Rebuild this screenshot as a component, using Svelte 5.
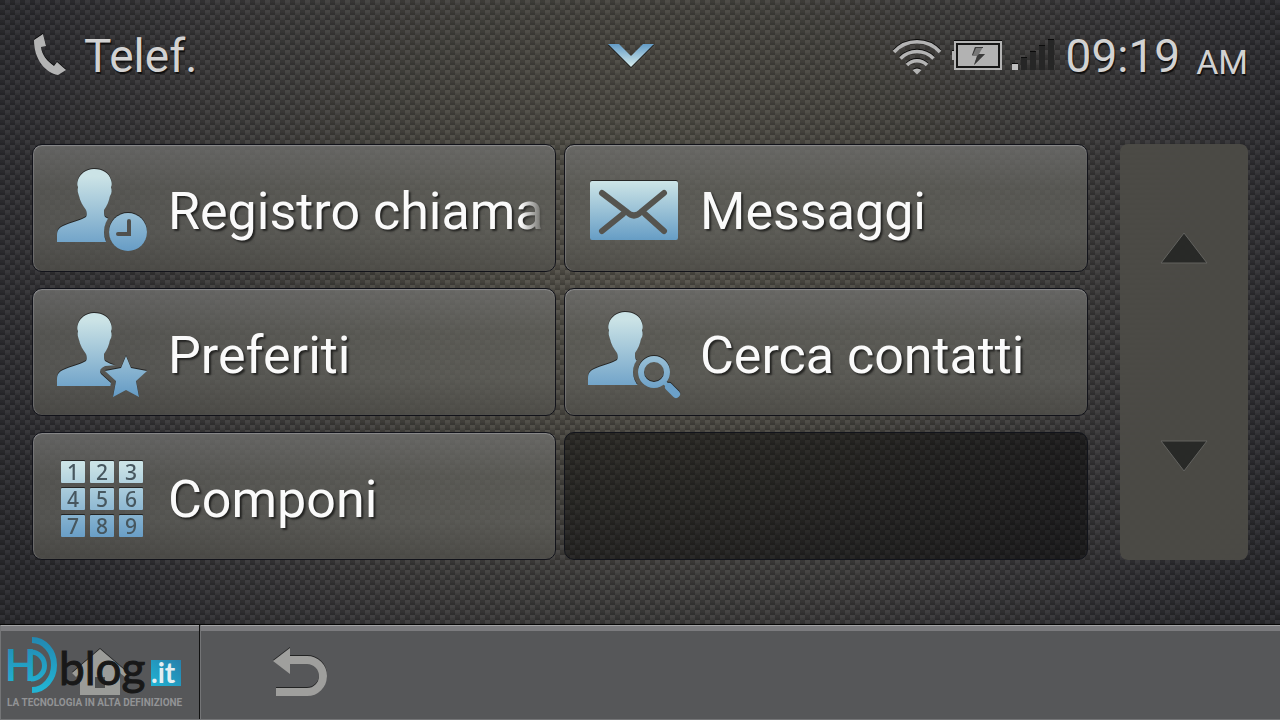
<script lang="ts">
  interface Entry {
    icon: "history" | "mail" | "star" | "search" | "keypad";
    label: string;
  }

  const entries: Entry[] = [
    { icon: "history", label: "Registro chiama" },
    { icon: "mail", label: "Messaggi" },
    { icon: "star", label: "Preferiti" },
    { icon: "search", label: "Cerca contatti" },
    { icon: "keypad", label: "Componi" },
  ];

  const keys = [1, 2, 3, 4, 5, 6, 7, 8, 9];
</script>

{#snippet person(cut: string)}
  <path
    mask="url(#{cut})"
    fill="url(#ice)"
    d="M38 5c-8 0-14 5-16 11-1 3-1 5 0 7-1 3 0 6 1 9 1 5 4 10 7 14 1 3 1 5 0 7-6 4-15 5-23 9-4 2-6 4-6 9v7h75v-7c0-5-2-7-6-9-8-4-15-5-21-9-1-2-1-4-1-7 3-4 5-9 6-14 2-3 2-6 1-9 1-2 1-4 0-7-2-7-8-11-17-11z"
  />
{/snippet}

<div class="screen">
  <header>
    <div class="title">
      <svg width="40" height="44" viewBox="32 32 40 44" aria-hidden="true">
        <path d="M34 38L43 32L46 44L41 45C42 53 47 59 54 64L57 60L66 68L58 73C46 71 34 58 34 38Z" fill="#b4b4b4" />
      </svg>
      <h1>Telef.</h1>
    </div>

    <button class="pull" aria-label="Apri">
      <svg width="48" height="24" viewBox="0 0 48 24">
        <path d="M1 0H12L24 12L36 0H47L24 23Z" fill="url(#chevron)" />
      </svg>
    </button>

    <div class="status">
      <svg width="50" height="40" viewBox="0 0 50 40" fill="none" stroke="#b4b4b4" stroke-width="3.500" aria-hidden="true">
        <path d="M2 16A31 31 0 0 1 48 16M8.500 22.500A23 23 0 0 1 41.500 22.500M15 29A14 14 0 0 1 35 29" />
        <path d="M20.500 34Q25 31 29.500 34L25 38.500Z" fill="#b4b4b4" stroke="none" />
      </svg>
      <svg width="54" height="40" viewBox="0 0 54 40" aria-hidden="true">
        <path d="M2 15h2v9H2z" fill="#b4b4b4" />
        <rect x="5" y="6" width="46" height="27" fill="#161616" stroke="#b4b4b4" stroke-width="2" />
        <rect x="8" y="9" width="40" height="21" fill="#b2b2b2" />
        <path d="M25 11h8l-4 7h6L24 29l3-9h-5z" fill="#777" />
        <path d="M25 11h8v1h-7l-3 7h-1zM29 18h6L24 29l3-9z" fill="#3a3a3a" />
      </svg>
      <svg width="42" height="40" viewBox="0 0 42 40" aria-hidden="true">
        <path d="M0 28h6v6H0z" fill="#c0c0c0" />
        <path d="M9 22h6v12H9zM18 16h6v18h-6zM27 10h6v24h-6zM36 4h6v30h-6z" fill="#262626" />
      </svg>
      <span class="clock">09:19</span>
      <span class="ampm">AM</span>
    </div>
  </header>

  <main>
    <div class="tiles">
      {#each entries as entry}
        <button class="tile">
          <svg class="icon" width="96" height="96" viewBox="0 0 96 96" aria-hidden="true">
            {#if entry.icon === "history"}
              {@render person("cut-history")}
              <circle cx="72" cy="68" r="19" fill="url(#ice)" />
              <path d="M73 57V70H62" fill="none" stroke="#50504d" stroke-width="4" stroke-linecap="round" />
            {:else if entry.icon === "star"}
              {@render person("cut-star")}
              <path d="M70 48L75 60L91 63L80 73L83 89L70 82L57 89L60 73L49 63L65 60Z" fill="url(#ice)" />
            {:else if entry.icon === "search"}
              <g transform="translate(-1 -1)">
                {@render person("cut-search")}
                <circle cx="67" cy="65" r="13" fill="none" stroke="url(#ice)" stroke-width="6" />
                <path d="M77 75L80 78" stroke="#71a6ca" stroke-width="4" />
                <path d="M82 80L89 87" stroke="#6ba0c8" stroke-width="8" stroke-linecap="round" />
              </g>
            {:else if entry.icon === "mail"}
              <rect x="2" y="17" width="88" height="59" rx="2" fill="url(#mail)" />
              <path
                d="M14 29L39 48Q46 55 53 48L76 29M14 67L35 50M76 67L57 50"
                fill="none"
                stroke="#55544f"
                stroke-width="6"
                stroke-linecap="round"
              />
            {:else}
              {#each keys as key, i}
                <rect x={5 + (i % 3) * 29} y={9 + Math.floor(i / 3) * 27} width="24" height="22" rx="1" fill="url(#ice)" />
                <text class="key" x={17 + (i % 3) * 29} y={28 + Math.floor(i / 3) * 27}>{key}</text>
              {/each}
            {/if}
          </svg>
          <span class="label">{entry.label}</span>
        </button>
      {/each}
      <div class="empty"></div>
    </div>

    <div class="scroller">
      <button aria-label="Su">
        <svg width="48" height="32" viewBox="0 0 48 32">
          <path d="M24 1L47 31H1Z" fill="#282927" stroke="#62625f" />
        </svg>
      </button>
      <button aria-label="Giù">
        <svg width="48" height="32" viewBox="0 0 48 32">
          <path d="M1 1H47L24 31Z" fill="#282927" stroke="#62625f" />
        </svg>
      </button>
    </div>
  </main>

  <footer>
    <button class="home" aria-label="Home">
      <svg width="56" height="48" viewBox="0 0 56 48">
        <path d="M28 1L56 25L53 29L48 25V47H8V25L4 29L0 25Z" fill="#9b9c99" />
        <path d="M23 29h10v11H23z" fill="#4c4d4d" />
      </svg>
    </button>
    <button class="back" aria-label="Indietro">
      <svg width="56" height="50" viewBox="0 0 56 50">
        <path d="M17 13H34A16 16 0 0 1 34 45H3" fill="none" stroke="#9f9f9d" stroke-width="8" />
        <path d="M0 14L17 1V27Z" fill="#9f9f9d" />
      </svg>
    </button>

    <!-- site badge laid over the home key -->
    <svg class="badge" width="192" height="80" viewBox="0 0 192 80">
      <text class="hd" x="5" y="50">H</text>
      <path d="M31 21A13 13 0 0 1 31 48" fill="none" stroke="url(#cyan)" stroke-width="5" />
      <path d="M32 9A22 25 0 0 1 32 59" fill="none" stroke="url(#cyan)" stroke-width="6" />
      <text class="blog" x="59" y="54">blog</text>
      <rect x="151" y="29" width="30" height="26" fill="url(#box)" />
      <text class="it" x="151" y="52">.it</text>
      <text class="motto" x="7" y="75">LA TECNOLOGIA IN ALTA DEFINIZIONE</text>
    </svg>
  </footer>
</div>

<svg class="defs" width="0" height="0" aria-hidden="true">
  <defs>
    <linearGradient id="ice" gradientUnits="userSpaceOnUse" x1="0" y1="4" x2="0" y2="88">
      <stop offset="0.100" stop-color="#cbe3e6" />
      <stop offset="1" stop-color="#659bc5" />
    </linearGradient>
    <linearGradient id="mail" x1="0" y1="0" x2="0" y2="1">
      <stop offset="0" stop-color="#cde5e7" />
      <stop offset="1" stop-color="#669dc5" />
    </linearGradient>
    <linearGradient id="chevron" x1="0" y1="0" x2="0" y2="1">
      <stop offset="0" stop-color="#639bc6" />
      <stop offset="1" stop-color="#d6ecec" />
    </linearGradient>
    <linearGradient id="cyan" gradientUnits="userSpaceOnUse" x1="0" y1="8" x2="0" y2="58">
      <stop offset="0" stop-color="#2389b2" />
      <stop offset="1" stop-color="#22b3d3" />
    </linearGradient>
    <linearGradient id="box" x1="0" y1="1" x2="1" y2="0">
      <stop offset="0" stop-color="#20b4d4" />
      <stop offset="1" stop-color="#277fab" />
    </linearGradient>
    <mask id="cut-history" maskUnits="userSpaceOnUse" x="0" y="0" width="96" height="96">
      <rect width="96" height="96" fill="#fff" />
      <circle cx="72" cy="68" r="24" />
      <rect x="60" y="50" width="36" height="46" />
    </mask>
    <mask id="cut-star" maskUnits="userSpaceOnUse" x="0" y="0" width="96" height="96">
      <rect width="96" height="96" fill="#fff" />
      <path d="M62 57L49 58Q42 61 45 66L55 75L53 84H96V48H58Z" />
    </mask>
    <mask id="cut-search" maskUnits="userSpaceOnUse" x="0" y="0" width="96" height="96">
      <rect width="96" height="96" fill="#fff" />
      <circle cx="67" cy="65" r="21" />
      <rect x="60" y="50" width="36" height="46" />
    </mask>
  </defs>
</svg>

<style>
  :global(body) {
    margin: 0;
    background: #29292b;
  }

  .screen {
    display: flex;
    flex-direction: column;
    min-height: 100vh;
    font-family: Roboto, "Open Sans", sans-serif;
    /* woven carbon texture under a soft spotlight */
    background:
      repeating-linear-gradient(rgba(0, 0, 0, 0) 0 2px, rgba(0, 0, 0, 0.12) 4px 5px),
      repeating-conic-gradient(rgba(255, 255, 255, 0.04) 0 25%, rgba(0, 0, 0, 0.12) 0 50%) 0 0 / 10px 10px,
      radial-gradient(ellipse 56% 85% at 50% 34%, #57544c 0%, #4a4842 35%, #373638 75%, #2b2b2f 100%);
  }

  button {
    margin: 0;
    padding: 0;
    border: none;
    background: none;
    font-family: inherit;
    cursor: pointer;
  }

  svg {
    display: block;
    flex: none;
  }

  .defs {
    position: absolute;
  }

  header {
    display: grid;
    grid-template-columns: 1fr auto 1fr;
    align-items: center;
    height: 112px;
    padding: 0 32px 0 14px;
    color: #d2d2d2;
    text-shadow: 1px 2px 1px rgba(0, 0, 0, 0.7);

    svg {
      filter: drop-shadow(0 -1px 0 rgba(0, 0, 0, 0.8));
    }

    .pull svg {
      filter: drop-shadow(0 1px 0 rgba(0, 0, 0, 0.8));
    }
  }

  .title {
    display: flex;
    align-items: center;
    gap: 12px;
    padding-left: 18px;
  }

  h1 {
    margin: 0;
    font-size: 46px;
    font-weight: 400;
    line-height: 56px;
  }

  .status {
    display: flex;
    align-items: center;
    justify-content: flex-end;
    gap: 8px;
  }

  .clock {
    padding: 0 8px 0 4px;
    font-size: 46px;
    line-height: 56px;
  }

  .ampm {
    padding-top: 12px;
    font-size: 34px;
    line-height: 40px;
  }

  main {
    display: flex;
    flex: 1;
    gap: 32px;
    padding: 32px 32px 64px;
  }

  .tiles {
    display: grid;
    flex: 1;
    grid-template-columns: repeat(2, minmax(0, 1fr));
    grid-auto-rows: minmax(128px, 1fr);
    gap: 16px 8px;
  }

  .tile {
    display: flex;
    align-items: center;
    gap: 16px;
    padding: 8px 10px 0 23px;
    border: 1px solid #12131a;
    border-radius: 10px;
    background: linear-gradient(
      rgba(112, 112, 110, 0.8),
      rgba(96, 96, 91, 0.76) 35%,
      rgba(96, 96, 91, 0.76) 70%,
      rgba(80, 79, 74, 0.8)
    );
    box-shadow:
      inset 0 1px 1px rgba(190, 190, 195, 0.4),
      inset 1px 0 1px rgba(180, 180, 185, 0.3);
    color: #fafafa;
    text-align: left;
  }

  .icon {
    filter: drop-shadow(0 -1px 0 rgba(20, 20, 20, 0.75));
  }

  .label {
    flex: 1;
    overflow: hidden;
    font-size: 52px;
    line-height: 64px;
    white-space: nowrap;
    text-shadow: 2px 2px 2px rgba(0, 0, 0, 0.6);
    mask-image: linear-gradient(to left, transparent, #000 24px);
  }

  .key {
    fill: #47575f;
    font-family: "Noto Sans", sans-serif;
    font-size: 21px;
    font-weight: 500;
    text-anchor: middle;
  }

  .empty {
    border: 1px solid #12141b;
    border-radius: 10px;
    background: linear-gradient(100deg, rgba(0, 0, 0, 0.4), rgba(0, 0, 0, 0.46));
  }

  .scroller {
    display: flex;
    flex-direction: column;
    width: 128px;
    border-radius: 8px;
    background: rgba(76, 75, 70, 0.94);

    button {
      display: flex;
      flex: 1;
      align-items: center;
      justify-content: center;
    }
  }

  footer {
    position: relative;
    display: flex;
    height: 94px;
    border-top: 1px solid #070707;
    border-bottom: 1px solid #747577;
    background: linear-gradient(#a2a2a4 0 1px, #7b7b7e 1px 6px, #565759 6px);

    button {
      display: flex;
      align-items: center;
      justify-content: center;
      width: 200px;
    }

    svg {
      filter: drop-shadow(0 -1px 0 rgba(0, 0, 0, 0.6));
    }
  }

  .home {
    border-right: 1px solid #111;
    border-left: 1px solid #747577;
  }

  .back {
    border-left: 1px solid #747577;
  }

  footer .badge {
    position: absolute;
    top: 6px;
    left: 0;
    filter: none;
    pointer-events: none;
  }

  .hd {
    fill: url(#cyan);
    font-size: 44px;
    font-weight: 500;
  }

  .blog {
    fill: #181818;
    stroke: #181818;
    stroke-width: 1px;
    font-family: Lato, sans-serif;
    font-size: 46px;
  }

  .it {
    fill: #e4eef2;
    font-family: Lato, sans-serif;
    font-size: 28px;
    font-weight: 700;
  }

  .motto {
    fill: #929395;
    font-size: 10px;
    font-weight: 700;
  }
</style>
